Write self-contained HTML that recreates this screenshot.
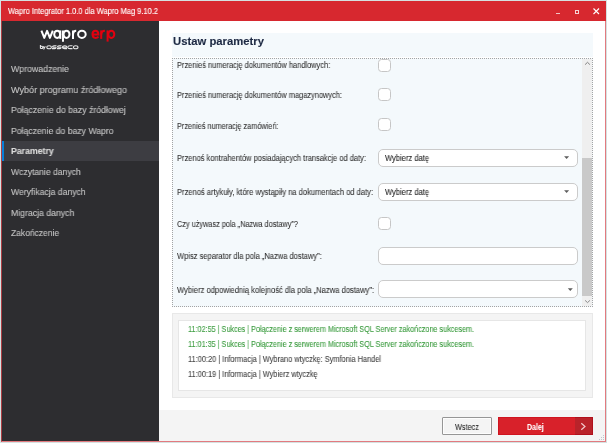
<!DOCTYPE html>
<html><head><meta charset="utf-8">
<style>
*{margin:0;padding:0;box-sizing:border-box}
html,body{width:607px;height:443px;overflow:hidden;background:#d5e1e1;font-family:"Liberation Sans",sans-serif}
.a{position:absolute}
.t{position:absolute;white-space:nowrap;transform-origin:0 0;line-height:normal;will-change:transform;-webkit-text-stroke:0.12px currentColor}
.cb{position:absolute;left:378px;width:13px;height:13px;border:1px solid #c6c6c6;border-radius:3.5px;background:#fff}
.dd{position:absolute;left:378px;width:200px;height:18px;border:1px solid #cbcbcb;border-radius:5px;background:#fff}
</style></head><body>
<div class="a" style="left:1px;top:1px;width:605px;height:441px;background:#fff;border:1px solid #e27a7f;border-top:0;border-left-color:#ab3c42"></div>
<div class="a" style="left:2px;top:21px;width:1px;height:420px;background:#233a3d"></div>
<div class="a" style="left:1px;top:1px;width:605px;height:20px;background:#d7282f"></div>
<svg class="a" style="left:0;top:0" width="607" height="21">
  <rect x="556" y="13" width="4" height="1" fill="#f1c2c4"/>
  <rect x="575.5" y="10.5" width="3" height="3" fill="none" stroke="#f6d3d5" stroke-width="1"/>
  <path d="M593.5 8.5 L599 14 M599 8.5 L593.5 14" stroke="#fff" stroke-width="1.1"/>
</svg>
<div class="a" style="left:2px;top:21px;width:157px;height:420px;background:#2d2d30"></div>
<svg class="a" style="left:0;top:0" width="160" height="60">
  <g fill="none" stroke="#fff" stroke-width="2" stroke-linejoin="round">
    <path d="M41.4 30.6 L44.3 37.9 L47.1 30.9 L49.9 37.9 L52.8 30.6"/>
    <ellipse cx="57.2" cy="34.3" rx="3.0" ry="3.6"/>
    <path d="M60.3 30.4 V38.9"/>
    <path d="M63 30.4 V41.8"/>
    <ellipse cx="66.5" cy="34.3" rx="3.0" ry="3.6"/>
    <path d="M73 38.9 V30.4"/>
    <path d="M73 34.6 Q73.2 30.7 76.2 30.7"/>
    <ellipse cx="81.9" cy="34.3" rx="3.8" ry="3.6"/>
  </g>
  <g fill="none" stroke="#e3000f" stroke-width="2">
    <path d="M92.5 34.4 H98.4 Q98.4 30.7 95.4 30.7 Q92.5 30.7 92.5 34.3 Q92.5 37.9 95.5 37.9 Q97.4 37.9 98.5 36.6"/>
    <path d="M101.2 38.9 V30.4"/>
    <path d="M101.2 34.6 Q101.4 30.7 104.9 30.7"/>
    <path d="M107.6 30.4 V41.6"/>
    <ellipse cx="111.3" cy="34.3" rx="3.0" ry="3.6"/>
  </g>
  <g fill="none" stroke="#e8e8e8" stroke-width="1.05">
    <path d="M40.4 45 V48.5 M40.4 47.2 Q40.6 46 42 46.2 Q43 46.5 42.6 48.2 Q41.5 48.8 40.4 48.2"/>
    <path d="M43.2 46.2 L44.2 48.6 M45.3 46.2 L43.6 49.4"/>
    <ellipse cx="49.1" cy="47.2" rx="2.3" ry="1.5"/>
    <path d="M56.5 45.8 H54 Q52.5 45.8 52.5 46.8 Q52.5 47.2 53.5 47.2 H55.3 Q56.3 47.2 56 48 Q55.6 48.6 54.5 48.6 H52"/>
    <path d="M61.5 45.8 H59 Q57.5 45.8 57.5 46.8 Q57.5 47.2 58.5 47.2 H60.3 Q61.3 47.2 61 48 Q60.6 48.6 59.5 48.6 H57"/>
    <path d="M62.5 47.2 H67 Q67 45.8 64.8 45.8 Q62.5 45.8 62.5 47.2 Q62.5 48.6 64.8 48.6 H67"/>
    <path d="M72.5 45.8 H70 Q67.8 45.8 67.8 47.2 Q67.8 48.6 70 48.6 H72.5"/>
    <ellipse cx="75.7" cy="47.2" rx="2.3" ry="1.5"/>
  </g>
</svg>
<div class="a" style="left:2px;top:141px;width:157px;height:20px;background:#3d3d42"></div>
<div class="a" style="left:2px;top:141px;width:2px;height:20px;background:#0780d8"></div>

<!-- content -->
<div class="a" style="left:172px;top:33px;width:421px;height:24px;background:#f4f9fc"></div>
<div class="a" style="left:172px;top:58px;width:421px;height:249px;background:#f4f9fc;border:1px dotted #a4a4a4"></div>
<div class="a" style="left:582px;top:59px;width:10px;height:247px;background:#efefef"></div>
<div class="a" style="left:582px;top:158px;width:10px;height:138px;background:#c9c9c9"></div>
<svg class="a" style="left:582px;top:59px" width="10" height="247">
  <path d="M3.1 5.6 L5.5 3.3 L7.9 5.6" fill="none" stroke="#808080" stroke-width="1"/>
  <path d="M3.1 241.4 L5.5 243.6 L7.9 241.4" fill="none" stroke="#8a8a8a" stroke-width="1"/>
</svg>

<div class="cb" style="top:58.5px"></div>
<div class="cb" style="top:88.4px"></div>
<div class="cb" style="top:118.4px"></div>
<div class="dd" style="top:148.5px"></div>
<div class="dd" style="top:182.5px"></div>
<div class="cb" style="top:217.1px"></div>
<div class="dd" style="top:246.9px"></div>
<div class="dd" style="top:280.4px"></div>

<svg class="a" style="left:0;top:0" width="607" height="443">
  <g fill="#5c5c5c"><polygon points="564.1,156.2 569.1,156.2 566.6,159"/><polygon points="564.1,190.2 569.1,190.2 566.6,193"/><polygon points="567.8,288.2 572.8,288.2 570.3,291"/></g>
</svg>
<!-- log -->
<div class="a" style="left:172px;top:313px;width:421px;height:85px;background:#f4f4f4;border:1px solid #e8e8e8"></div>
<div class="a" style="left:178px;top:320px;width:408px;height:71px;background:#fff;border:1px solid #e6e6e6"></div>

<!-- footer -->
<div class="a" style="left:159px;top:410px;width:446px;height:31px;background:#f4f4f4"></div>
<div class="a" style="left:442px;top:417px;width:50px;height:18px;border:1px solid #969696;border-radius:1px;background:#f4f4f4;box-shadow:inset 0 0 0 1px #fdfdfd"></div>
<div class="a" style="left:498px;top:417px;width:95px;height:18px;background:#d8212a;border:1px solid #cf1420"></div>
<div class="a" style="left:575px;top:417px;width:18px;height:18px;background:#b9232a;border-top:1px solid #b0101c;border-bottom:1px solid #b0101c;border-right:1px solid #b0101c"></div>
<svg class="a" style="left:575px;top:417px" width="18" height="18"><path d="M6.3 6.2 L10 9.5 L6.3 12.8" fill="none" stroke="#f2c9cc" stroke-width="1.2"/></svg>
<svg class="a" style="left:591px;top:427px" width="16" height="16">
  <g fill="#bfc6cc"><rect x="12" y="8" width="1" height="1"/><rect x="12" y="10" width="1" height="1"/><rect x="12" y="12" width="1" height="1"/><rect x="10" y="10" width="1" height="1"/><rect x="10" y="12" width="1" height="1"/><rect x="8" y="12" width="1" height="1"/></g>
</svg>
<div class="t" style="left:8.00px;top:6px;font-size:8.4px;color:#fff;transform:scaleX(0.8934);">Wapro Integrator 1.0.0 dla Wapro Mag 9.10.2</div>
<div class="t" style="left:10.50px;top:64.0px;font-size:9.1px;color:#c3c3c3;transform:scaleX(0.9642);">Wprowadzenie</div>
<div class="t" style="left:10.50px;top:84.5px;font-size:9.1px;color:#c3c3c3;transform:scaleX(0.9950);">Wybór programu źródłowego</div>
<div class="t" style="left:10.50px;top:105.0px;font-size:9.1px;color:#c3c3c3;transform:scaleX(0.9582);">Połączenie do bazy źródłowej</div>
<div class="t" style="left:10.50px;top:125.5px;font-size:9.1px;color:#c3c3c3;transform:scaleX(0.9504);">Połączenie do bazy Wapro</div>
<div class="t" style="left:10.70px;top:146px;font-size:9.1px;font-weight:bold;color:#dcdcdc;transform:scaleX(0.9596);">Parametry</div>
<div class="t" style="left:10.50px;top:166.5px;font-size:9.1px;color:#c3c3c3;transform:scaleX(0.9445);">Wczytanie danych</div>
<div class="t" style="left:10.50px;top:187.0px;font-size:9.1px;color:#c3c3c3;transform:scaleX(0.9493);">Weryfikacja danych</div>
<div class="t" style="left:10.50px;top:207.5px;font-size:9.1px;color:#c3c3c3;transform:scaleX(0.9559);">Migracja danych</div>
<div class="t" style="left:10.50px;top:228.0px;font-size:9.1px;color:#c3c3c3;transform:scaleX(0.9328);">Zakończenie</div>
<div class="t" style="left:172.50px;top:35px;font-size:11.2px;font-weight:bold;color:#1d2943;transform:scaleX(1.0092);">Ustaw parametry</div>
<div class="t" style="left:177.00px;top:60px;font-size:8.4px;color:#333;transform:scaleX(0.8870);-webkit-text-stroke:0.08px currentColor">Przenieś numerację dokumentów handlowych:</div>
<div class="t" style="left:177.00px;top:90px;font-size:8.4px;color:#333;transform:scaleX(0.8861);-webkit-text-stroke:0.08px currentColor">Przenieś numerację dokumentów magazynowych:</div>
<div class="t" style="left:177.00px;top:120.5px;font-size:8.4px;color:#333;transform:scaleX(0.8713);-webkit-text-stroke:0.08px currentColor">Przenieś numerację zamówień:</div>
<div class="t" style="left:177.00px;top:153px;font-size:8.4px;color:#333;transform:scaleX(0.8942);-webkit-text-stroke:0.08px currentColor">Przenoś kontrahentów posiadających transakcje od daty:</div>
<div class="t" style="left:177.00px;top:187px;font-size:8.4px;color:#333;transform:scaleX(0.9023);-webkit-text-stroke:0.08px currentColor">Przenoś artykuły, które wystąpiły na dokumentach od daty:</div>
<div class="t" style="left:177.00px;top:219px;font-size:8.4px;color:#333;transform:scaleX(0.8752);-webkit-text-stroke:0.08px currentColor">Czy używasz pola „Nazwa dostawy”?</div>
<div class="t" style="left:177.00px;top:251px;font-size:8.4px;color:#333;transform:scaleX(0.8984);-webkit-text-stroke:0.08px currentColor">Wpisz separator dla pola „Nazwa dostawy”:</div>
<div class="t" style="left:177.00px;top:285px;font-size:8.4px;color:#333;transform:scaleX(0.9065);-webkit-text-stroke:0.08px currentColor">Wybierz odpowiednią kolejność dla pola „Nazwa dostawy”:</div>
<div class="t" style="left:384.80px;top:153px;font-size:8.4px;color:#222;transform:scaleX(0.9014);-webkit-text-stroke:0.08px currentColor">Wybierz datę</div>
<div class="t" style="left:384.80px;top:187px;font-size:8.4px;color:#222;transform:scaleX(0.9014);-webkit-text-stroke:0.08px currentColor">Wybierz datę</div>
<div class="t" style="left:187.60px;top:324px;font-size:8.4px;color:#36993a;transform:scaleX(0.8640);-webkit-text-stroke:0.08px currentColor">11:02:55 | Sukces | Połączenie z serwerem Microsoft SQL Server zakończone sukcesem.</div>
<div class="t" style="left:187.60px;top:339px;font-size:8.4px;color:#36993a;transform:scaleX(0.8640);-webkit-text-stroke:0.08px currentColor">11:01:35 | Sukces | Połączenie z serwerem Microsoft SQL Server zakończone sukcesem.</div>
<div class="t" style="left:187.60px;top:354px;font-size:8.4px;color:#404040;transform:scaleX(0.8824);-webkit-text-stroke:0.08px currentColor">11:00:20 | Informacja | Wybrano wtyczkę: Symfonia Handel</div>
<div class="t" style="left:187.60px;top:369px;font-size:8.4px;color:#404040;transform:scaleX(0.8815);-webkit-text-stroke:0.08px currentColor">11:00:19 | Informacja | Wybierz wtyczkę</div>
<div class="t" style="left:454.90px;top:422px;font-size:8.8px;color:#202020;transform:scaleX(0.8286);-webkit-text-stroke:0.05px currentColor">Wstecz</div>
<div class="t" style="left:527.40px;top:422px;font-size:8.8px;font-weight:bold;color:#fff;transform:scaleX(0.7988);-webkit-text-stroke:0.05px currentColor">Dalej</div>
</body></html>
